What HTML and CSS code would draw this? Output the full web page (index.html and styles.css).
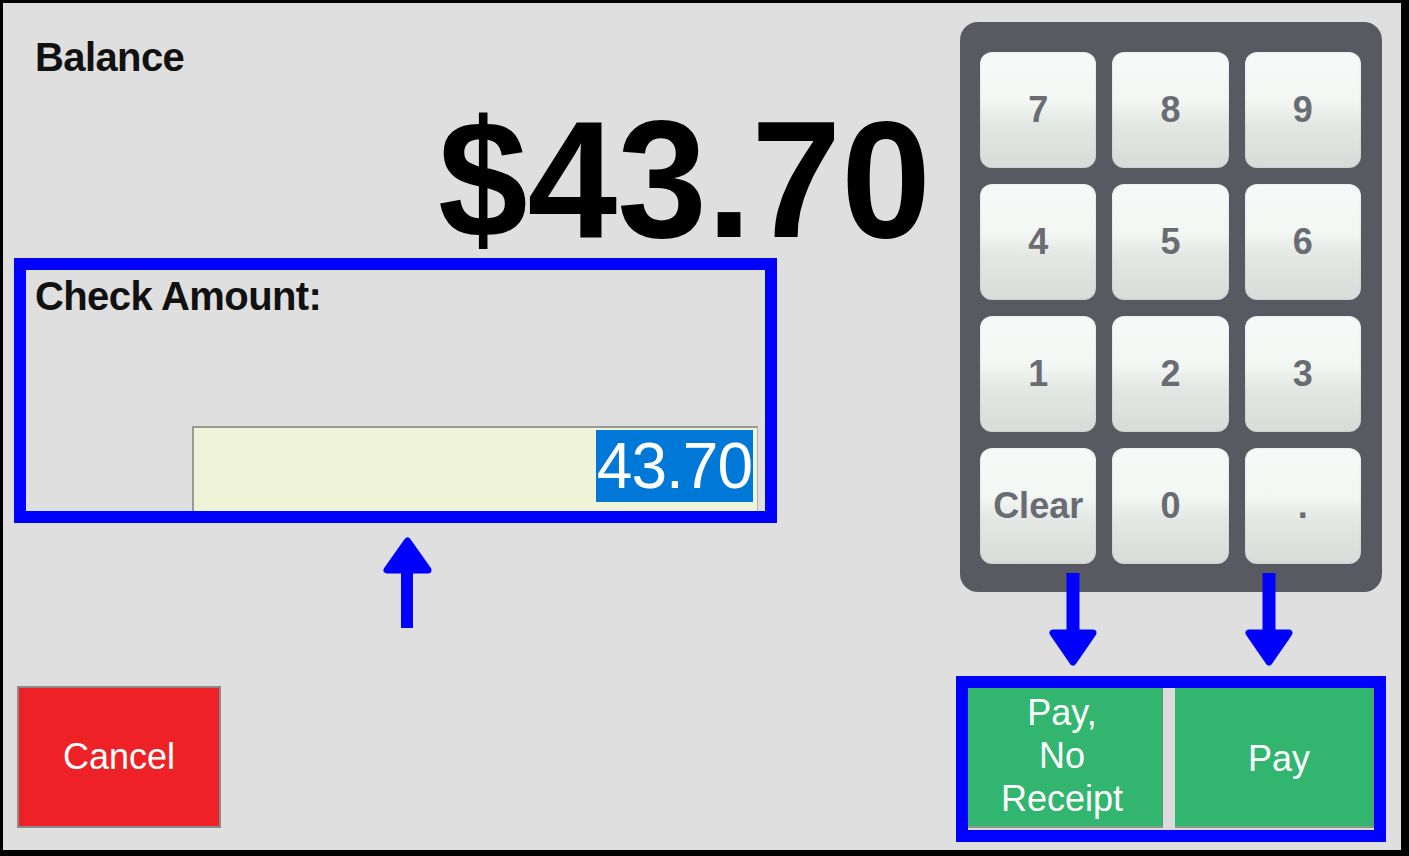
FILE: index.html
```html
<!DOCTYPE html>
<html lang="en">
<head>
<meta charset="utf-8">
<title>Check Payment</title>
<link rel="stylesheet" href="styles.css">
</head>
<body>
<div class="screen">
  <div class="left">
    <div class="balance-label">Balance</div>
    <div class="balance-amount"><span class="amount-text">$43.70</span></div>
    <div class="check-box">
      <div class="check-label">Check Amount:</div>
      <div class="check-input"><span class="check-value">43.70</span></div>
    </div>
    <svg class="arrow-up" width="49" height="91" viewBox="0 0 49 91">
      <rect x="18" y="30" width="12" height="61" fill="#0000ff"/>
      <polygon points="4,33 45,33 24.5,4" fill="#0000ff" stroke="#0000ff" stroke-width="7" stroke-linejoin="round"/>
    </svg>
    <div class="cancel">Cancel</div>
  </div>
  <div class="right">
    <div class="keypad">
      <div class="key">7</div>
      <div class="key">8</div>
      <div class="key">9</div>
      <div class="key">4</div>
      <div class="key">5</div>
      <div class="key">6</div>
      <div class="key">1</div>
      <div class="key">2</div>
      <div class="key">3</div>
      <div class="key">Clear</div>
      <div class="key">0</div>
      <div class="key">.</div>
    </div>
    <svg class="arrow-down arrow-down-1" width="50" height="94" viewBox="0 0 50 94">
      <rect x="18.5" y="0" width="13" height="62" fill="#0000ff"/>
      <polygon points="5,60 45,60 25,89" fill="#0000ff" stroke="#0000ff" stroke-width="7" stroke-linejoin="round"/>
    </svg>
    <svg class="arrow-down arrow-down-2" width="50" height="94" viewBox="0 0 50 94">
      <rect x="18.5" y="0" width="13" height="62" fill="#0000ff"/>
      <polygon points="5,60 45,60 25,89" fill="#0000ff" stroke="#0000ff" stroke-width="7" stroke-linejoin="round"/>
    </svg>
    <div class="pay-box">
      <div class="pay-btn pay-noreceipt">Pay,<br>No<br>Receipt</div>
      <div class="pay-btn pay-main">Pay</div>
    </div>
  </div>
</div>
</body>
</html>
```

FILE: styles.css
```css
html, body {
  margin: 0;
  padding: 0;
  background: #000;
}

body {
  width: 1409px;
  height: 856px;
  overflow: hidden;
  font-family: "Liberation Sans", Arial, sans-serif;
}

.screen {
  margin: 3px 0 0 3px;
  width: 1398px;
  height: 847px;
  background: #dfdfdf;
  display: flex;
  flex-direction: row;
}

.left {
  width: 953px;
  display: flex;
  flex-direction: column;
  align-items: flex-start;
  padding-top: 34px;
  box-sizing: border-box;
}

.balance-label {
  font-size: 40px;
  font-weight: bold;
  line-height: 40px;
  color: #111;
  padding-left: 32px;
  letter-spacing: -0.6px;
}

.balance-amount {
  align-self: stretch;
  margin-top: 32px;
  padding-right: 25px;
  text-align: right;
  font-size: 167px;
  font-weight: bold;
  line-height: 140px;
  color: #000;
}

.amount-text {
  display: inline-block;
  transform: scaleX(0.965);
  transform-origin: right center;
}

.check-box {
  margin-top: 9px;
  margin-left: 11px;
  width: 763px;
  height: 265px;
  box-sizing: border-box;
  border: 12px solid #0000ff;
  display: flex;
  flex-direction: column;
}

.check-label {
  margin-top: 6px;
  padding-left: 9px;
  font-size: 40px;
  font-weight: bold;
  line-height: 40px;
  letter-spacing: -0.6px;
  color: #111;
}

.check-input {
  margin-top: auto;
  align-self: flex-end;
  margin-right: 7px;
  width: 566px;
  height: 85px;
  box-sizing: border-box;
  background: #eff3d8;
  border-top: 2px solid #9a9a94;
  border-left: 2px solid #9a9a94;
  border-right: 1px solid #b4b4ae;
  display: flex;
  justify-content: flex-end;
  align-items: flex-start;
  padding-top: 2px;
  padding-right: 4px;
}

.check-value {
  background: #0078d7;
  color: #fff;
  font-size: 64px;
  line-height: 72px;
  height: 72px;
  letter-spacing: -1px;
  padding: 0 1px 0 1px;
}

.arrow-up {
  display: block;
  margin-top: 14px;
  margin-left: 380px;
}

.cancel {
  margin-top: 58px;
  margin-left: 14px;
  width: 204px;
  height: 142px;
  box-sizing: border-box;
  background: #ee2226;
  border: 2px solid #8a8a8a;
  color: #fff;
  font-size: 36px;
  display: flex;
  align-items: center;
  justify-content: center;
}

.right {
  position: relative;
  display: flex;
  flex-direction: column;
  align-items: flex-start;
}

.keypad {
  margin-top: 19px;
  margin-left: 4px;
  width: 422px;
  height: 570px;
  box-sizing: border-box;
  padding: 30px 21px 28px 20px;
  background: #595a61;
  border-radius: 18px;
  display: grid;
  grid-template-columns: repeat(3, 1fr);
  grid-template-rows: repeat(4, 116px);
  column-gap: 16px;
  row-gap: 16px;
}

.key {
  border-radius: 12px;
  background: linear-gradient(to bottom, #f6faf8 0%, #f3f7f4 42%, #e4e8e4 62%, #d8dcd8 100%);
  box-shadow: inset 0 0 2px rgba(0, 0, 0, 0.15);
  color: #696c72;
  font-size: 36px;
  font-weight: bold;
  display: flex;
  align-items: center;
  justify-content: center;
  padding-bottom: 1px;
  box-sizing: border-box;
}

.arrow-down {
  position: absolute;
  top: 570px;
  display: block;
}

.arrow-down-1 {
  left: 92px;
}

.arrow-down-2 {
  left: 288px;
}

.pay-box {
  margin-top: 84px;
  width: 430px;
  height: 166px;
  box-sizing: border-box;
  border: 12px solid #0000ff;
  background: #dcdcdc;
  display: flex;
  gap: 12px;
  padding-bottom: 2px;
}

.pay-btn {
  flex: 1;
  background: #32b66f;
  border-right: 1px solid #6b8a78;
  border-bottom: 2px solid #8a9a90;
  color: #fff;
  font-size: 36px;
  line-height: 43px;
  text-align: center;
  display: flex;
  align-items: center;
  justify-content: center;
  box-sizing: border-box;
}

.pay-noreceipt {
  padding-right: 6px;
  padding-bottom: 3px;
}

.pay-main {
  padding-left: 10px;
  padding-top: 2px;
}
```
